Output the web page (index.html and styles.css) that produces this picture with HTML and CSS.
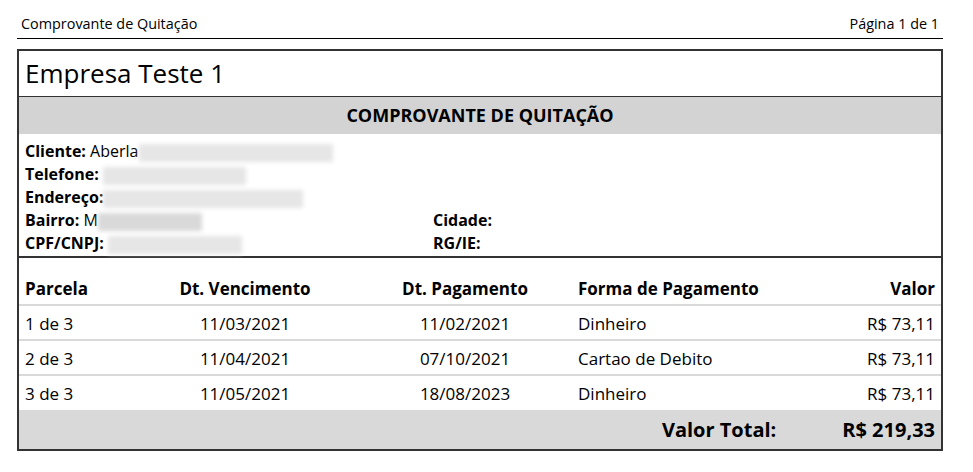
FILE: index.html
```html
<!DOCTYPE html>
<html lang="pt-BR">
<head>
<meta charset="utf-8">
<title>Comprovante de Quitação</title>
<link rel="stylesheet" href="styles.css">
</head>
<body>
<div class="page">
  <div class="top">
    <span class="top-title">Comprovante de Quitação</span>
    <span class="top-page">Página 1 de 1</span>
  </div>
  <div class="box">
    <div class="company">Empresa Teste 1</div>
    <div class="band">COMPROVANTE DE QUITAÇÃO</div>
    <div class="info">
      <div class="info-row"><b>Cliente:</b> Aberla <span class="blur blur-cliente"></span></div>
      <div class="info-row"><b>Telefone:</b> <span class="blur blur-tel"></span></div>
      <div class="info-row"><b>Endereço:</b><span class="blur blur-end"></span></div>
      <div class="info-pair">
        <div class="info-row"><b>Bairro:</b> M<span class="blur blur-bairro"></span></div>
        <div class="info-row"><b>Cidade:</b></div>
      </div>
      <div class="info-pair">
        <div class="info-row"><b>CPF/CNPJ:</b> <span class="blur blur-cpf"></span></div>
        <div class="info-row"><b>RG/IE:</b></div>
      </div>
    </div>
    <table class="grid">
      <colgroup>
        <col class="c1"><col class="c2"><col class="c3"><col class="c4"><col class="c5">
      </colgroup>
      <thead>
        <tr>
          <th class="left">Parcela</th>
          <th class="center">Dt. Vencimento</th>
          <th class="center">Dt. Pagamento</th>
          <th class="left">Forma de Pagamento</th>
          <th class="right">Valor</th>
        </tr>
      </thead>
      <tbody>
        <tr>
          <td class="left">1 de 3</td>
          <td class="center">11/03/2021</td>
          <td class="center">11/02/2021</td>
          <td class="left">Dinheiro</td>
          <td class="right">R$ 73,11</td>
        </tr>
        <tr>
          <td class="left">2 de 3</td>
          <td class="center">11/04/2021</td>
          <td class="center">07/10/2021</td>
          <td class="left">Cartao de Debito</td>
          <td class="right">R$ 73,11</td>
        </tr>
        <tr>
          <td class="left">3 de 3</td>
          <td class="center">11/05/2021</td>
          <td class="center">18/08/2023</td>
          <td class="left">Dinheiro</td>
          <td class="right">R$ 73,11</td>
        </tr>
      </tbody>
    </table>
    <div class="total">
      <span class="total-label">Valor Total:</span>
      <span class="total-value">R$ 219,33</span>
    </div>
  </div>
</div>
</body>
</html>
```

FILE: styles.css
```css
* { box-sizing: border-box; }
html, body { margin: 0; padding: 0; background: #fff; }
body {
  font-family: "Open Sans", "Noto Sans", "DejaVu Sans", sans-serif;
  color: #000;
}
.page {
  width: 926px;
  margin: 0 0 0 17px;
  padding-top: 14px;
}
.top {
  display: flex;
  justify-content: space-between;
  align-items: flex-end;
  padding: 0 4px 5px 4px;
  border-bottom: 1px solid #000;
  font-size: 14.4px;
  line-height: 19px;
}
.box {
  margin-top: 10px;
  border: 2px solid #333;
}
.company {
  font-size: 26px;
  line-height: 44px;
  height: 46px;
  padding: 0 6px;
  border-bottom: 1px solid #333;
}
.band {
  background: #d3d3d3;
  height: 37px;
  line-height: 37px;
  text-align: center;
  font-weight: 700;
  font-size: 18px;
}
.info {
  padding: 6px 6px 1px 6px;
  border-bottom: 2px solid #333;
  font-size: 16px;
  line-height: 23px;
}
.info b { font-weight: 700; }
.info-pair {
  display: grid;
  grid-template-columns: 408px 1fr;
}
.info-row { white-space: nowrap; }
.blur {
  display: inline-block;
  vertical-align: middle;
  background: #e6e6e6;
  filter: blur(2px);
  height: 18px;
}
.blur-cliente { width: 194px; margin-left: -4px; }
.blur-tel { width: 143px; }
.blur-end { width: 200px; }
.blur-bairro { width: 104px; background: #d9d9d9; }
.blur-cpf { width: 134px; }
.grid {
  width: 100%;
  border-collapse: collapse;
  table-layout: fixed;
  font-size: 17px;
}
.c1 { width: 113px; }
.c2 { width: 226px; }
.c3 { width: 214px; }
.c4 { width: 200px; }
.grid th {
  font-weight: 700;
  height: 47px;
  padding: 14px 6px 0 6px;
  border-bottom: 2px solid #d9d9d9;
}
.grid td {
  height: 35px;
  padding: 1px 6px 0 6px;
  border-bottom: 2px solid #d9d9d9;
}
.grid tbody tr:last-child td { border-bottom: none; }
.left { text-align: left; }
.center { text-align: center; }
.right { text-align: right; }
.total {
  background: #d9d9d9;
  height: 39px;
  display: flex;
  justify-content: flex-end;
  align-items: center;
  padding: 0 6px;
  font-weight: 700;
  font-size: 20px;
}
.total-label { margin-right: 66px; }
```
